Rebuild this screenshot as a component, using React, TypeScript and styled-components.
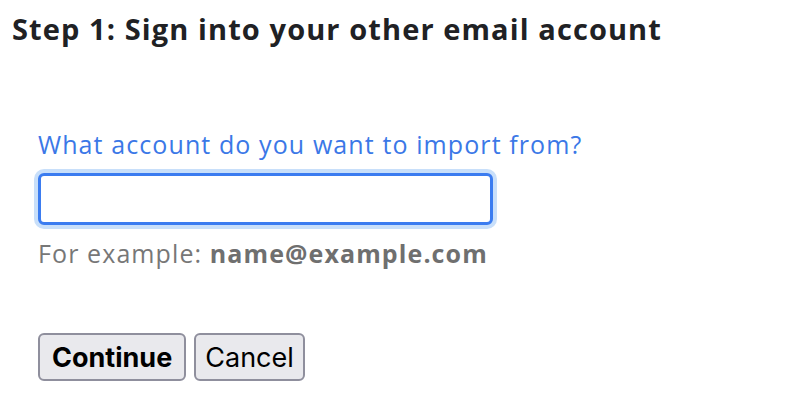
import React from 'react';
import { createGlobalStyle, styled } from 'styled-components';

const GlobalStyle = createGlobalStyle`
    body {
        margin: 0;
        background: #ffffff;
        font-family: "Open Sans", Roboto, sans-serif;
    }
`;

const Page = styled.div`
    padding: 10px 12px;
`;

const Title = styled.h1`
    margin: 0;
    font-size: 29px;
    line-height: 38px;
    font-weight: 700;
    letter-spacing: 1.1px;
    color: #202124;
`;

const Form = styled.form`
    display: flex;
    flex-direction: column;
    align-items: flex-start;
    padding: 80px 0 0 26px;
`;

const Label = styled.label`
    font-size: 25px;
    line-height: 32px;
    letter-spacing: 1.1px;
    color: #3b78e7;
`;

const Input = styled.input`
    box-sizing: border-box;
    width: 455px;
    height: 52px;
    margin-top: 13px;
    padding: 0 6px;
    border: 3px solid #3b7cf0;
    border-radius: 6px;
    box-shadow: 0 0 0 4px #c8dffa;
    outline: none;
    font-size: 24px;
    font-family: inherit;
    caret-color: #000000;
`;

const Hint = styled.div`
    margin-top: 12px;
    font-size: 25px;
    line-height: 32px;
    letter-spacing: 1.1px;
    color: #777777;

    b {
        font-weight: 700;
        color: #6f6f6f;
    }
`;

const Actions = styled.div`
    display: flex;
    gap: 8px;
    margin-top: 64px;
`;

const Button = styled.button<{ $primary?: boolean }>`
    box-sizing: border-box;
    height: 48px;
    padding: 0 ${p => (p.$primary ? 12 : 9)}px;
    border: 2px solid #8f8f9d;
    border-radius: 6px;
    background: #e9e9ed;
    color: #000000;
    font-family: Inter, Roboto, sans-serif;
    font-size: 27px;
    font-weight: ${p => (p.$primary ? 700 : 400)};
`;

const App: React.FC = () => {
    return (
        <Page>
            <GlobalStyle />
            <Title>Step 1: Sign into your other email account</Title>
            <Form onSubmit={e => e.preventDefault()}>
                <Label htmlFor="account">What account do you want to import from?</Label>
                <Input id="account" type="text" autoFocus />
                <Hint>
                    For example: <b>name@example.com</b>
                </Hint>
                <Actions>
                    <Button $primary type="submit">
                        Continue
                    </Button>
                    <Button type="button">Cancel</Button>
                </Actions>
            </Form>
        </Page>
    );
};

export default App;
